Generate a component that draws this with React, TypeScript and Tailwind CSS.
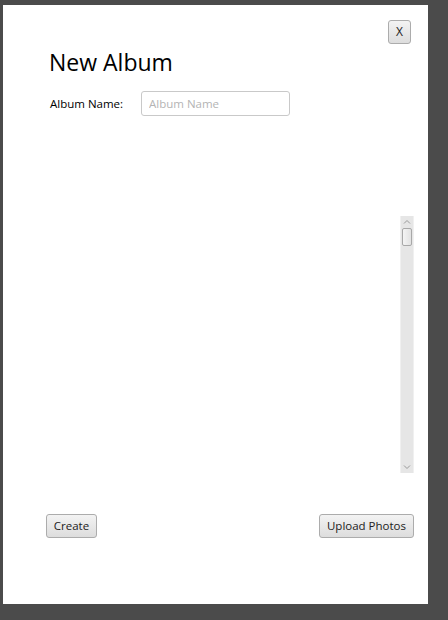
import React from 'react';

const font = { fontFamily: '"Open Sans", "Noto Sans", sans-serif' };

function Button({ children, className = '' }: { children: React.ReactNode; className?: string }) {
  return (
    <button
      type="button"
      className={`h-[24px] whitespace-nowrap rounded-[3px] border border-[#acacac] bg-gradient-to-b from-[#f3f3f3] to-[#dddddd] px-[6px] text-[11.5px] leading-none text-[#222] ${className}`}
    >
      {children}
    </button>
  );
}

function Scrollbar() {
  return (
    <div className="flex h-[257px] w-[14px] flex-col items-center border-x border-[#f0f0f0] bg-[#e6e6e6]">
      <svg width="10" height="10" viewBox="0 0 10 10" className="mt-[1px]">
        <path d="M2 6.5 L5 3.5 L8 6.5" fill="none" stroke="#9a9a9a" strokeWidth="1" />
      </svg>
      <div className="mt-[1px] h-[18px] w-[10px] rounded-[2px] border border-[#a8a8a8] bg-gradient-to-r from-[#f4f4f4] to-[#e2e2e2]" />
      <div className="flex-1" />
      <svg width="10" height="10" viewBox="0 0 10 10" className="mb-[1px]">
        <path d="M2 3.5 L5 6.5 L8 3.5" fill="none" stroke="#9a9a9a" strokeWidth="1" />
      </svg>
    </div>
  );
}

export default function App() {
  return (
    <div className="h-[620px] w-[448px] bg-[#4b4b4b] pl-[3px] pt-[5px]" style={font}>
      <div className="flex h-[599px] w-[425px] flex-col bg-white">
        {/* close */}
        <div className="flex justify-end pr-[17px] pt-[15px]">
          <Button className="w-[23px] !px-0 text-[12px]">X</Button>
        </div>

        {/* title */}
        <h1 className="ml-[46px] mt-[3px] text-[23px] leading-[30px] text-black">New Album</h1>

        {/* form */}
        <div className="ml-[47px] mt-[14px] flex items-center">
          <label className="w-[91px] text-[11.5px] text-black">Album Name:</label>
          <input
            placeholder="Album Name"
            className="h-[25px] w-[149px] rounded-[3px] border border-[#c9c9c9] px-[7px] text-[11.5px] text-black outline-none placeholder:text-[#b4b4b4]"
          />
        </div>

        {/* photos area */}
        <div className="mt-[100px] flex justify-end pr-[14px]">
          <Scrollbar />
        </div>

        {/* actions */}
        <div className="mt-[41px] flex justify-between pl-[43px] pr-[14px]">
          <Button className="w-[51px]">Create</Button>
          <Button className="w-[95px]">Upload Photos</Button>
        </div>
      </div>
    </div>
  );
}
